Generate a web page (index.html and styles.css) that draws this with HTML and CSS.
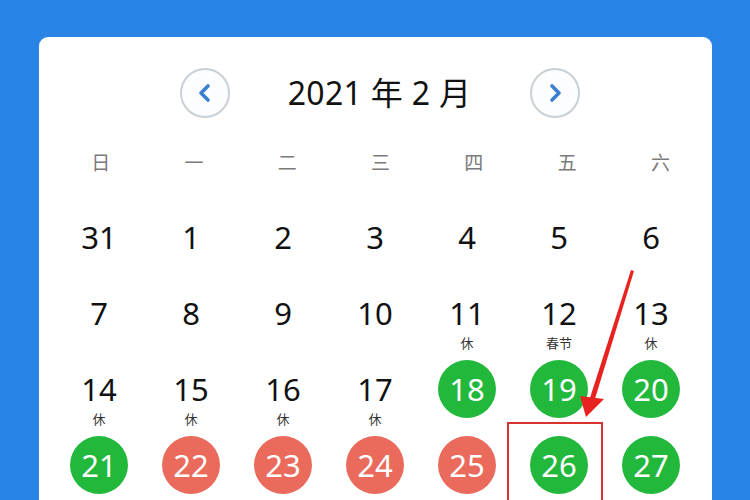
FILE: index.html
```html
<!DOCTYPE html>
<html lang="zh">
<head>
<meta charset="utf-8">
<link rel="stylesheet" href="styles.css">
</head>
<body>
<div class="page">
  <div class="card">
    <div class="header">
      <button class="nav">
        <svg width="24" height="24" viewBox="0 0 24 24"><path d="M15 5 L8 12 L15 19" fill="none" stroke="#3b7fd2" stroke-width="3.6" stroke-linecap="round" stroke-linejoin="round"/></svg>
      </button>
      <div class="title">2021 年 2 月</div>
      <button class="nav">
        <svg width="24" height="24" viewBox="0 0 24 24"><path d="M9 5 L16 12 L9 19" fill="none" stroke="#3b7fd2" stroke-width="3.6" stroke-linecap="round" stroke-linejoin="round"/></svg>
      </button>
    </div>
    <div class="weekdays">
      <span>日</span><span>一</span><span>二</span><span>三</span><span>四</span><span>五</span><span>六</span>
    </div>
    <div class="days">
      <div class="cell"><span class="num">31</span></div>
      <div class="cell"><span class="num">1</span></div>
      <div class="cell"><span class="num">2</span></div>
      <div class="cell"><span class="num">3</span></div>
      <div class="cell"><span class="num">4</span></div>
      <div class="cell"><span class="num">5</span></div>
      <div class="cell"><span class="num">6</span></div>

      <div class="cell"><span class="num">7</span></div>
      <div class="cell"><span class="num">8</span></div>
      <div class="cell"><span class="num">9</span></div>
      <div class="cell"><span class="num">10</span></div>
      <div class="cell"><span class="num">11</span><span class="sub">休</span></div>
      <div class="cell"><span class="num">12</span><span class="sub">春节</span></div>
      <div class="cell"><span class="num">13</span><span class="sub">休</span></div>

      <div class="cell"><span class="num">14</span><span class="sub">休</span></div>
      <div class="cell"><span class="num">15</span><span class="sub">休</span></div>
      <div class="cell"><span class="num">16</span><span class="sub">休</span></div>
      <div class="cell"><span class="num">17</span><span class="sub">休</span></div>
      <div class="cell"><span class="num dot green">18</span></div>
      <div class="cell"><span class="num dot green">19</span></div>
      <div class="cell"><span class="num dot green">20</span></div>

      <div class="cell"><span class="num dot green">21</span></div>
      <div class="cell"><span class="num dot red">22</span></div>
      <div class="cell"><span class="num dot red">23</span></div>
      <div class="cell"><span class="num dot red">24</span></div>
      <div class="cell"><span class="num dot red">25</span></div>
      <div class="cell"><span class="num dot green">26</span></div>
      <div class="cell"><span class="num dot green">27</span></div>
    </div>
    <div class="mark-box"></div>
    <svg class="arrow" width="750" height="500" viewBox="0 0 750 500">
      <polygon points="631,270 634,271 594,402 589,401" fill="#e8231f"/>
      <polygon points="586,417 580,396 604,399" fill="#e8231f"/>
    </svg>
  </div>
</div>
</body>
</html>
```

FILE: styles.css
```css
* { box-sizing: border-box; }
html, body {
  margin: 0;
  padding: 0;
  width: 750px;
  height: 500px;
  overflow: hidden;
  background: #2a84e6;
  font-family: "Noto Sans", "Noto Sans CJK SC", sans-serif;
}
.page {
  padding: 37px 38px 0 39px;
  height: 500px;
  overflow: hidden;
}
.card {
  position: relative;
  background: #fff;
  border-radius: 9px;
  height: 520px;
  padding-top: 31px;
}
.header {
  display: flex;
  align-items: center;
  justify-content: center;
  height: 50px;
  margin-left: 8px;
}
.nav {
  width: 50px;
  height: 50px;
  border-radius: 50%;
  border: 2px solid #c9d0d6;
  background: #fbfdff;
  display: flex;
  align-items: center;
  justify-content: center;
  padding: 0;
}
.title {
  width: 300px;
  text-align: center;
  font-size: 32px;
  color: #111;
  line-height: 50px;
  letter-spacing: 0.3px;
}
.weekdays {
  display: grid;
  grid-template-columns: repeat(7, 93.3px);
  margin: 25px 0 0 15px;
  height: 40px;
  align-items: center;
}
.weekdays span {
  text-align: center;
  font-size: 19px;
  color: #7a7a7a;
  line-height: 40px;
}
.days {
  display: grid;
  grid-template-columns: repeat(7, 92px);
  grid-auto-rows: 76px;
  margin: 16px 0 0 14px;
}
.cell {
  display: flex;
  flex-direction: column;
  align-items: center;
  padding-top: 9px;
}
.num {
  width: 58px;
  height: 58px;
  line-height: 58px;
  text-align: center;
  font-size: 31px;
  color: #111;
}
.dot {
  border-radius: 50%;
  color: #fff;
  font-size: 31px;
}
.green { background: #21b83c; }
.red { background: #ea6a5c; }
.sub {
  font-size: 13px;
  line-height: 16px;
  margin-top: -7px;
  color: #333;
}
.mark-box {
  position: absolute;
  left: 468px;
  top: 385px;
  width: 96px;
  height: 100px;
  border: 2px solid #d8332f;
}
.arrow {
  position: absolute;
  left: -39px;
  top: -37px;
  pointer-events: none;
}
```
